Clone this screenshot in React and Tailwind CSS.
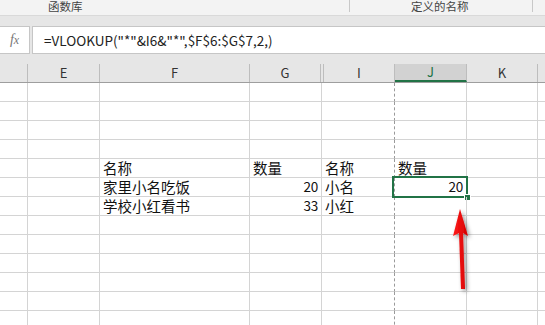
const FONT = { fontFamily: '"Noto Sans CJK SC", "Noto Sans", sans-serif' };

const headCols = [
  { w: 'w-[28px]', label: '' },
  { w: 'w-[72px]', label: 'E' },
  { w: 'w-[150px]', label: 'F' },
  { w: 'w-[71px]', label: 'G' },
  { w: 'w-[3px]', label: '' },
  { w: 'w-[71px]', label: 'I' },
  { w: 'w-[72px]', label: 'J', active: true },
  { w: 'w-[71px]', label: 'K' },
];

const rows = [
  {}, {}, {}, {},
  { f: '名称', g: '数量', i: '名称', j: '数量' },
  { f: '家里小名吃饭', g: '20', i: '小名', j: '20', sel: true },
  { f: '学校小红看书', g: '33', i: '小红' },
  {}, {}, {}, {}, {}, {},
];

function Cell({ w, children, right, dashed }) {
  return (
    <div
      className={`${w} shrink-0 h-full border-b border-r border-b-[#d4d4d4] flex items-end pb-[1px] text-[14.5px] leading-[17px] text-[#111] whitespace-nowrap ${
        dashed ? 'border-r-[#9a9a9a] [border-right-style:dashed]' : 'border-r-[#d4d4d4]'
      } ${right ? 'justify-end pr-[3px]' : 'pl-[3px]'}`}
    >
      {children}
    </div>
  );
}

function Num({ children }) {
  return <span className="text-[13.5px] tracking-[-0.2px]">{children}</span>;
}

export default function App() {
  return (
    <div className="relative w-[545px] h-[325px] overflow-hidden bg-white" style={FONT}>
      {/* ribbon group labels */}
      <div className="h-[16px] bg-[#f3f3f3] border-b border-[#d9d9d9] flex text-[11.5px] text-[#444]">
        <div className="w-[350px] shrink-0 border-r border-[#c8c8c8] h-[12px] flex items-start">
          <span className="ml-[48px] leading-[12px]">函数库</span>
        </div>
        <div className="w-[183px] shrink-0 border-r border-[#c8c8c8] h-[12px] flex items-start">
          <span className="ml-[61px] leading-[12px]">定义的名称</span>
        </div>
      </div>

      {/* formula bar */}
      <div className="h-[48px] bg-[#e6e6e6] pt-[10px] flex">
        <div className="w-[30px] h-[28px] bg-white border border-l-0 border-[#c6c6c6] flex items-center justify-center">
          <span className="text-[14px] italic text-[#777] leading-none" style={{ fontFamily: '"Liberation Serif", serif' }}>
            f<span className="text-[12px]">x</span>
          </span>
        </div>
        <div className="ml-[2px] flex-1 h-[28px] bg-white border border-r-0 border-[#c6c6c6] flex items-center pl-[11px] text-[13.5px] text-[#222]">
          =VLOOKUP("*"&amp;I6&amp;"*",$F$6:$G$7,2,)
        </div>
      </div>

      {/* column headers */}
      <div className="h-[19px] flex bg-[#e6e6e6] border-b border-[#9e9e9e] text-[13px] text-[#333]">
        {headCols.map((c, idx) => (
          <div
            key={idx}
            className={`${c.w} shrink-0 h-full border-r border-[#bdbdbd] flex items-center justify-center ${
              c.active ? 'bg-[#d2d2d2] text-[#217346] border-b-2 border-b-[#217346]' : ''
            }`}
          >
            {c.label}
          </div>
        ))}
        <div className="flex-1" />
      </div>

      {/* cells */}
      {rows.map((r, idx) => (
        <div key={idx} className="h-[19px] flex">
          <Cell w="w-[28px]" />
          <Cell w="w-[72px]" />
          <Cell w="w-[150px]">{r.f}</Cell>
          <Cell w="w-[72px]" right={r.g && /\d/.test(r.g)}>
            {r.g && /\d/.test(r.g) ? <Num>{r.g}</Num> : r.g}
          </Cell>
          <Cell w="w-[73px]" dashed>{r.i}</Cell>
          <div className="relative w-[72px] shrink-0 h-full">
            <Cell w="w-[72px]" right={r.sel}>
              {r.sel ? <Num>{r.j}</Num> : r.j}
            </Cell>
            {r.sel && (
              <>
                <div className="absolute left-[-3px] top-[-2px] w-[76px] h-[22px] border-2 border-[#217346]" />
                <div className="absolute left-[69px] top-[16px] w-[5px] h-[5px] bg-[#217346] border border-white box-content" />
              </>
            )}
          </div>
          <Cell w="w-[71px]" />
          <div className="flex-1 h-full border-b border-[#d4d4d4]" />
        </div>
      ))}

      {/* red arrow annotation */}
      <svg className="absolute left-[440px] top-[200px]" width="45" height="100" viewBox="0 0 45 100">
        <defs>
          <linearGradient id="ar" x1="0" y1="0" x2="1" y2="0">
            <stop offset="0" stopColor="#ff1a1a" />
            <stop offset="1" stopColor="#d40000" />
          </linearGradient>
          <filter id="sh" x="-50%" y="-20%" width="200%" height="140%">
            <feDropShadow dx="2" dy="2" stdDeviation="2" floodColor="#000" floodOpacity="0.45" />
          </filter>
        </defs>
        <path
          d="M20 9 L28 36 L23 33 L25 89 L21 89 L19 33 L13 36 Z"
          fill="url(#ar)"
          filter="url(#sh)"
        />
      </svg>
    </div>
  );
}
